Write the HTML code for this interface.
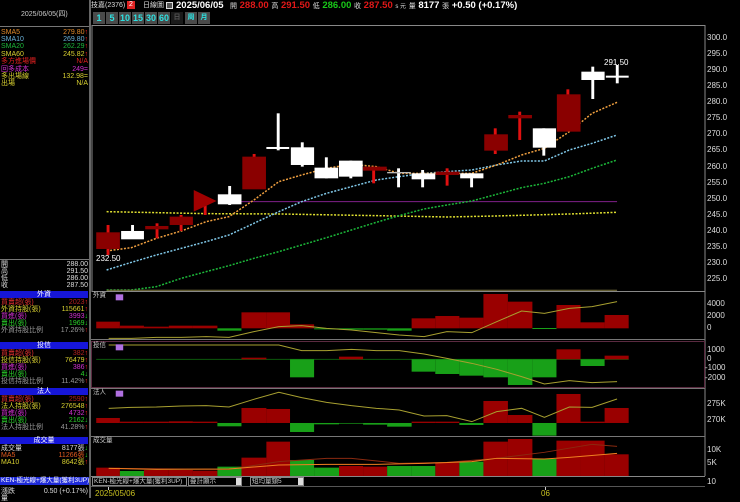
<!DOCTYPE html>
<html><head><meta charset="utf-8"><style>
*{margin:0;padding:0;box-sizing:border-box}
body{width:740px;height:498px;background:#000;overflow:hidden;position:relative;font-family:"Liberation Sans","Noto Sans CJK TC",sans-serif;color:#ddd}
.a{position:absolute;white-space:nowrap;line-height:1}
.s{font-size:7px}
.r{text-align:right}
.hd{position:absolute;left:0;width:88px;height:7px;background:#1616d8;color:#fff;font-size:7px;text-align:center;line-height:7px}
.btn{position:absolute;top:12px;height:12px;background:#4a4a4a;color:#2ee0e0;font-size:9px;text-align:center;line-height:12px;font-weight:bold}
.ax{position:absolute;left:707px;font-size:8px;color:#ddd;line-height:1}
</style></head><body>

<!-- left panel -->
<div class="a s" style="left:21px;top:11px;color:#ccc">2025/06/05(四)</div>
<div style="position:absolute;left:0;top:26px;width:89px;height:1px;background:#777"></div>
<div style="position:absolute;left:89px;top:0;width:2px;height:498px;background:#666"></div>

<div class="a s" style="left:1px;top:29px;color:#e08a2a">SMA5</div><div class="a s r" style="left:40px;width:48px;top:29px;color:#e08a2a">279.80<span style="color:#f22">↑</span></div>
<div class="a s" style="left:1px;top:36px;color:#6ab0d8">SMA10</div><div class="a s r" style="left:40px;width:48px;top:36px;color:#6ab0d8">269.80<span style="color:#f22">↑</span></div>
<div class="a s" style="left:1px;top:43px;color:#1cb83a">SMA20</div><div class="a s r" style="left:40px;width:48px;top:43px;color:#1cb83a">262.29<span style="color:#f22">↑</span></div>
<div class="a s" style="left:1px;top:51px;color:#d8d030">SMA60</div><div class="a s r" style="left:40px;width:48px;top:51px;color:#d8d030">245.82<span style="color:#f22">↑</span></div>
<div class="a s" style="left:1px;top:58px;color:#e02020">多方進場價</div><div class="a s r" style="left:40px;width:48px;top:58px;color:#e02020">N/A</div>
<div class="a s" style="left:1px;top:66px;color:#d030d0">回多成本</div><div class="a s r" style="left:40px;width:48px;top:66px;color:#d030d0">249=</div>
<div class="a s" style="left:1px;top:73px;color:#d8d030">多出場線</div><div class="a s r" style="left:40px;width:48px;top:73px;color:#d8d030">132.98=</div>
<div class="a s" style="left:1px;top:80px;color:#d8d030">出場</div><div class="a s r" style="left:40px;width:48px;top:80px;color:#d8d030">N/A</div>

<div style="position:absolute;left:0;top:259px;width:89px;height:1px;background:#777"></div>
<div class="a s" style="left:1px;top:261px">開</div><div class="a s r" style="left:40px;width:48px;top:261px">288.00</div>
<div class="a s" style="left:1px;top:268px">高</div><div class="a s r" style="left:40px;width:48px;top:268px">291.50</div>
<div class="a s" style="left:1px;top:275px">低</div><div class="a s r" style="left:40px;width:48px;top:275px">286.00</div>
<div class="a s" style="left:1px;top:282px">收</div><div class="a s r" style="left:40px;width:48px;top:282px">287.50</div>

<div class="hd" style="top:291px">外資</div>
<div class="a s" style="left:1px;top:299px;color:#e03030">買賣超(張)</div><div class="a s r" style="left:40px;width:48px;top:299px;color:#b02020">2023<span style="color:#f22">↑</span></div>
<div class="a s" style="left:1px;top:306px;color:#d8d030">外資持股(張)</div><div class="a s r" style="left:40px;width:48px;top:306px;color:#d8d030">115661<span style="color:#f22">↑</span></div>
<div class="a s" style="left:1px;top:313px;color:#d030d0">買進(張)</div><div class="a s r" style="left:40px;width:48px;top:313px;color:#d030d0">3993<span style="color:#2d2">↓</span></div>
<div class="a s" style="left:1px;top:320px;color:#2ad02a">賣出(張)</div><div class="a s r" style="left:40px;width:48px;top:320px;color:#2ad02a">1969<span style="color:#2d2">↓</span></div>
<div class="a s" style="left:1px;top:327px;color:#999">外資持股比例</div><div class="a s r" style="left:40px;width:48px;top:327px;color:#999">17.26%<span style="color:#f22">↑</span></div>

<div class="hd" style="top:342px">投信</div>
<div class="a s" style="left:1px;top:350px;color:#e03030">買賣超(張)</div><div class="a s r" style="left:40px;width:48px;top:350px;color:#b02020">382<span style="color:#f22">↑</span></div>
<div class="a s" style="left:1px;top:357px;color:#d8d030">投信持股(張)</div><div class="a s r" style="left:40px;width:48px;top:357px;color:#d8d030">76479<span style="color:#f22">↑</span></div>
<div class="a s" style="left:1px;top:364px;color:#d030d0">買進(張)</div><div class="a s r" style="left:40px;width:48px;top:364px;color:#d030d0">386<span style="color:#f22">↑</span></div>
<div class="a s" style="left:1px;top:371px;color:#2ad02a">賣出(張)</div><div class="a s r" style="left:40px;width:48px;top:371px;color:#2ad02a">4<span style="color:#2d2">↓</span></div>
<div class="a s" style="left:1px;top:378px;color:#999">投信持股比例</div><div class="a s r" style="left:40px;width:48px;top:378px;color:#999">11.42%<span style="color:#f22">↑</span></div>

<div class="hd" style="top:388px">法人</div>
<div class="a s" style="left:1px;top:396px;color:#e03030">買賣超(張)</div><div class="a s r" style="left:40px;width:48px;top:396px;color:#b02020">2590<span style="color:#f22">↑</span></div>
<div class="a s" style="left:1px;top:403px;color:#d8d030">法人持股(張)</div><div class="a s r" style="left:40px;width:48px;top:403px;color:#d8d030">276548<span style="color:#f22">↑</span></div>
<div class="a s" style="left:1px;top:410px;color:#d030d0">買進(張)</div><div class="a s r" style="left:40px;width:48px;top:410px;color:#d030d0">4732<span style="color:#f22">↑</span></div>
<div class="a s" style="left:1px;top:417px;color:#2ad02a">賣出(張)</div><div class="a s r" style="left:40px;width:48px;top:417px;color:#2ad02a">2162<span style="color:#2d2">↓</span></div>
<div class="a s" style="left:1px;top:424px;color:#999">法人持股比例</div><div class="a s r" style="left:40px;width:48px;top:424px;color:#999">41.28%<span style="color:#f22">↑</span></div>

<div class="hd" style="top:437px">成交量</div>
<div class="a s" style="left:1px;top:445px;color:#ddd">成交量</div><div class="a s r" style="left:40px;width:48px;top:445px;color:#ddd">8177張<span style="color:#2d2">↓</span></div>
<div class="a s" style="left:1px;top:452px;color:#e05a20">MA5</div><div class="a s r" style="left:40px;width:48px;top:452px;color:#e05a20">11266張<span style="color:#2d2">↓</span></div>
<div class="a s" style="left:1px;top:459px;color:#d8d030">MA10</div><div class="a s r" style="left:40px;width:48px;top:459px;color:#d8d030">8642張<span style="color:#f22">↑</span></div>

<div class="a" style="left:0;top:477px;width:89px;height:8px;background:#1e2ad8;color:#fff;font-size:6.5px;line-height:8px;padding-left:1px">KEN-極光線+爆大量(獲利3UP)</div>
<div class="a s" style="left:1px;top:488px">漲跌</div><div class="a s r" style="left:30px;width:58px;top:488px">0.50 (+0.17%)</div>
<div class="a s" style="left:1px;top:495px">量</div>

<!-- header -->
<div class="a" style="left:91px;top:2px;font-size:7px;color:#ddd">技嘉(2376)</div>
<div class="a" style="left:127px;top:1px;width:8px;height:8px;background:#d22;color:#fff;font-size:7px;text-align:center;line-height:8px">2</div>
<div class="a" style="left:143px;top:2px;font-size:7px">日線圖</div>
<div class="a" style="left:166px;top:2px;width:7px;height:7px;border:1px solid #ddd;background:#555"></div>
<div class="a" style="left:176px;top:1px;font-size:9.5px;font-weight:bold;color:#fff">2025/06/05</div>
<div class="a" style="left:230px;top:1px;font-size:9.5px;font-weight:bold"><span style="font-size:7px;font-weight:normal">開</span> <span style="color:#e01818">288.00</span> <span style="font-size:7px;font-weight:normal">高</span> <span style="color:#e01818">291.50</span> <span style="font-size:7px;font-weight:normal">低</span> <span style="color:#18c818">286.00</span> <span style="font-size:7px;font-weight:normal">收</span> <span style="color:#e01818">287.50</span> <span style="font-size:6px;font-weight:normal">s 元</span> <span style="font-size:7px;font-weight:normal">量</span> <span style="color:#fff">8177</span> <span style="font-size:7px;font-weight:normal">張</span> <span style="color:#fff">+0.50 (+0.17%)</span></div>

<div class="btn" style="left:93px;width:12px">1</div>
<div class="btn" style="left:106px;width:12px">5</div>
<div class="btn" style="left:119px;width:12px">10</div>
<div class="btn" style="left:132px;width:12px">15</div>
<div class="btn" style="left:145px;width:12px">30</div>
<div class="btn" style="left:158px;width:12px">60</div>
<div class="btn" style="left:171px;width:12px;background:#1a1a1a;color:#555;font-size:7px">日</div>
<div class="btn" style="left:185px;width:12px;font-size:7px">周</div>
<div class="btn" style="left:198px;width:12px;font-size:7px">月</div>

<svg width="740" height="498" style="position:absolute;left:0;top:0">
<rect x="92" y="25.5" width="613" height="266" fill="none" stroke="#888" stroke-width="1"/>
<line x1="705" y1="25" x2="705" y2="476" stroke="#888"/>
<line x1="91" y1="339.5" x2="705" y2="339.5" stroke="#777"/>
<rect x="91.5" y="341.5" width="613" height="46" fill="none" stroke="#5a2a40"/>
<line x1="91" y1="388.5" x2="705" y2="388.5" stroke="#777"/>
<line x1="91" y1="436.5" x2="705" y2="436.5" stroke="#777"/>
<line x1="91" y1="476.5" x2="705" y2="476.5" stroke="#888"/>
<line x1="91" y1="486.5" x2="705" y2="486.5" stroke="#555"/>

<g transform="translate(90,25) scale(0.415,0.3333)">
 <line x1="310" y1="530" x2="1270" y2="530" stroke="#80208a" stroke-width="1" vector-effect="non-scaling-stroke"/>
 <polyline fill="none" stroke="#e0e030" stroke-width="1.5" stroke-dasharray="2 1.5" vector-effect="non-scaling-stroke" points="40,560 160,563 280,566 455,567 690,572 860,576 980,573 1155,567 1270,562"/>
 <polyline fill="none" stroke="#1cb83a" stroke-width="1.5" stroke-dasharray="2 1.5" vector-effect="non-scaling-stroke" points="40,795 100,795 160,785 220,760 280,740 335,722 395,700 455,680 510,660 570,638 630,615 690,592 745,572 805,552 860,540 920,528 980,508 1040,488 1095,475 1155,455 1210,430 1270,405"/>
 <polyline fill="none" stroke="#80c8e8" stroke-width="1.5" stroke-dasharray="2 1.5" vector-effect="non-scaling-stroke" points="40,735 100,712 160,690 220,670 280,650 335,630 395,595 455,560 510,530 570,505 630,485 690,465 745,455 805,445 860,440 920,435 980,420 1040,408 1095,408 1155,375 1210,355 1270,330"/>
 <polyline fill="none" stroke="#f0a040" stroke-width="1.5" stroke-dasharray="2 1.5" vector-effect="non-scaling-stroke" points="40,678 100,668 160,640 220,618 280,590 335,575 395,525 455,470 510,450 570,430 630,418 690,425 745,445 805,445 860,445 920,445 980,420 1040,390 1095,370 1155,320 1210,265 1270,232"/>
 <line x1="40" y1="796" x2="1270" y2="796" stroke="#807840" stroke-width="1" vector-effect="non-scaling-stroke"/>
 <g fill="#e01010">
  <rect x="40" y="600" width="7" height="90"/>
  <rect x="158" y="595" width="7" height="45"/>
  <rect x="216" y="570" width="7" height="48"/>
  <rect x="274" y="540" width="7" height="30"/>
  <rect x="392" y="387" width="7" height="10"/>
  <rect x="680" y="425" width="7" height="50"/>
  <rect x="857" y="430" width="7" height="52"/>
  <rect x="973" y="310" width="7" height="77"/>
  <rect x="1032" y="260" width="7" height="85"/>
  <rect x="1148" y="193" width="7" height="20"/>
 </g>
 <g fill="#8a0000">
  <rect x="15" y="622" width="57" height="50"/>
  <rect x="133" y="603" width="56" height="10"/>
  <rect x="192" y="575" width="56" height="25"/>
  <polygon points="250,495 305,528 250,560" fill="#a00000"/>
  <rect x="367" y="395" width="57" height="98"/>
  <rect x="658" y="425" width="57" height="12"/>
  <rect x="833" y="440" width="57" height="10"/>
  <rect x="950" y="328" width="57" height="49"/>
  <rect x="1008" y="270" width="57" height="10"/>
  <rect x="1125" y="208" width="57" height="112"/>
 </g>
 <g fill="#fff">
  <rect x="99" y="600" width="7" height="20"/>
  <rect x="75" y="618" width="55" height="25"/>
  <rect x="333" y="483" width="7" height="57"/>
  <rect x="308" y="508" width="57" height="30"/>
  <rect x="450" y="265" width="7" height="111"/>
  <rect x="425" y="366" width="55" height="6"/>
  <rect x="508" y="352" width="7" height="73"/>
  <rect x="484" y="367" width="56" height="53"/>
  <rect x="566" y="397" width="7" height="63"/>
  <rect x="541" y="428" width="57" height="32"/>
  <rect x="625" y="407" width="7" height="53"/>
  <rect x="600" y="407" width="57" height="48"/>
  <rect x="740" y="430" width="7" height="57"/>
  <rect x="716" y="441" width="57" height="4" fill="#bbb"/>
  <rect x="798" y="435" width="7" height="52"/>
  <rect x="775" y="445" width="57" height="18"/>
  <rect x="916" y="445" width="7" height="42"/>
  <rect x="892" y="445" width="56" height="15"/>
  <rect x="1090" y="310" width="7" height="82"/>
  <rect x="1067" y="310" width="56" height="58"/>
  <rect x="1208" y="125" width="7" height="97"/>
  <rect x="1184" y="140" width="56" height="25"/>
  <rect x="1267" y="120" width="7" height="55"/>
  <rect x="1243" y="152" width="55" height="6"/>
 </g>
</g>
<text x="604" y="65" fill="#fff" font-size="8" font-family="Liberation Sans">291.50</text>
<text x="96" y="261" fill="#fff" font-size="8" font-family="Liberation Sans">232.50</text>

<g transform="translate(90,285) scale(0.415,0.3333)">
 <g fill="#9a0000">
  <rect x="15" y="110" width="57" height="20"/><rect x="72" y="122" width="58" height="8"/><rect x="130" y="125" width="60" height="5"/><rect x="190" y="122" width="58" height="8"/><rect x="248" y="122" width="59" height="8"/>
  <rect x="365" y="82" width="60" height="48"/><rect x="425" y="82" width="57" height="48"/><rect x="482" y="118" width="58" height="12"/>
  <rect x="775" y="100" width="57" height="30"/><rect x="832" y="93" width="58" height="37"/><rect x="890" y="98" width="58" height="32"/><rect x="948" y="27" width="59" height="103"/><rect x="1007" y="50" width="59" height="80"/>
  <rect x="1124" y="60" width="58" height="70"/><rect x="1182" y="112" width="58" height="18"/><rect x="1240" y="90" width="58" height="40"/>
 </g>
 <g fill="#18a018">
  <rect x="307" y="130" width="58" height="7"/><rect x="540" y="130" width="60" height="3"/><rect x="600" y="130" width="58" height="4"/><rect x="658" y="130" width="58" height="4"/><rect x="716" y="130" width="59" height="7"/><rect x="1066" y="129" width="58" height="3"/>
 </g>
 <polyline fill="none" stroke="#a8a030" stroke-width="1" vector-effect="non-scaling-stroke" points="45,160 100,160 160,157 220,157 280,155 335,157 395,140 455,125 510,122 570,130 630,135 690,143 745,150 805,155 860,140 920,143 980,110 1040,78 1095,85 1155,70 1210,65 1270,50"/>
 <rect x="62" y="28" width="18" height="18" fill="#b070e0"/>
 <line x1="15" y1="223" x2="1298" y2="223" stroke="#0c5a0c" stroke-width="1" vector-effect="non-scaling-stroke"/>
 <g fill="#9a0000"><rect x="365" y="218" width="60" height="5"/><rect x="600" y="215" width="58" height="8"/><rect x="1124" y="193" width="58" height="30"/><rect x="1240" y="212" width="58" height="11"/></g>
 <g fill="#18a018"><rect x="482" y="223" width="58" height="54"/><rect x="775" y="223" width="57" height="37"/><rect x="832" y="223" width="58" height="44"/><rect x="890" y="223" width="58" height="49"/><rect x="948" y="223" width="59" height="54"/><rect x="1007" y="223" width="59" height="77"/><rect x="1066" y="223" width="58" height="54"/><rect x="1182" y="223" width="58" height="20"/></g>
 <polyline fill="none" stroke="#a8a030" stroke-width="1" vector-effect="non-scaling-stroke" points="45,180 455,180 510,197 570,197 630,193 690,197 745,197 805,207 860,220 920,235 980,253 1040,275 1095,297 1155,287 1210,293 1270,290"/>
 <rect x="62" y="178" width="18" height="18" fill="#b070e0"/>
 <g fill="#9a0000">
  <rect x="15" y="399" width="57" height="15"/><rect x="72" y="410" width="58" height="4"/><rect x="130" y="410" width="60" height="4"/><rect x="190" y="409" width="58" height="5"/><rect x="248" y="410" width="59" height="4"/>
  <rect x="365" y="369" width="60" height="45"/><rect x="425" y="372" width="57" height="42"/><rect x="775" y="410" width="57" height="4"/><rect x="832" y="410" width="58" height="4"/>
  <rect x="948" y="348" width="59" height="66"/><rect x="1007" y="390" width="59" height="24"/><rect x="1124" y="327" width="58" height="87"/><rect x="1182" y="410" width="58" height="4"/><rect x="1240" y="369" width="58" height="45"/>
 </g>
 <g fill="#18a018"><rect x="307" y="414" width="58" height="10"/><rect x="482" y="414" width="58" height="27"/><rect x="540" y="414" width="60" height="4"/><rect x="600" y="414" width="58" height="2"/><rect x="658" y="414" width="58" height="5"/><rect x="716" y="414" width="59" height="11"/><rect x="890" y="414" width="58" height="6"/><rect x="1066" y="414" width="58" height="38"/></g>
 <polyline fill="none" stroke="#a8a030" stroke-width="1" vector-effect="non-scaling-stroke" points="45,370 100,367 160,366 220,363 280,362 335,366 395,343 455,322 510,338 570,352 630,362 690,370 745,375 805,393 860,392 920,410 980,380 1040,370 1095,397 1155,366 1210,367 1270,342"/>
 <rect x="62" y="317" width="18" height="18" fill="#b070e0"/>
 <g fill="#9a0000">
  <rect x="15" y="548" width="57" height="25"/><rect x="130" y="555" width="60" height="18"/><rect x="190" y="555" width="58" height="18"/><rect x="248" y="557" width="59" height="16"/>
  <rect x="365" y="518" width="60" height="55"/><rect x="425" y="470" width="57" height="103"/><rect x="600" y="543" width="58" height="30"/><rect x="658" y="545" width="58" height="28"/><rect x="832" y="533" width="58" height="40"/>
  <rect x="948" y="470" width="59" height="103"/><rect x="1007" y="462" width="59" height="111"/><rect x="1124" y="467" width="58" height="106"/><rect x="1182" y="467" width="58" height="106"/><rect x="1240" y="508" width="58" height="65"/>
 </g>
 <g fill="#18a018"><rect x="72" y="558" width="58" height="15"/><rect x="307" y="545" width="58" height="28"/><rect x="482" y="525" width="58" height="48"/><rect x="540" y="548" width="60" height="25"/><rect x="716" y="543" width="59" height="30"/><rect x="775" y="543" width="57" height="30"/><rect x="890" y="530" width="58" height="43"/><rect x="1066" y="522" width="58" height="51"/></g>
 <polyline fill="none" stroke="#8a2a10" stroke-width="1" vector-effect="non-scaling-stroke" points="45,550 335,553 455,530 570,520 630,520 745,535 860,532 980,520 1095,502 1210,478 1270,484"/>
 <polyline fill="none" stroke="#f08020" stroke-width="1" vector-effect="non-scaling-stroke" points="45,550 160,553 335,552 455,540 570,538 690,538 805,535 920,530 980,520 1095,522 1155,517 1270,505"/>
</g>
</svg>

<div class="a" style="left:93px;top:293px;font-size:6.5px;color:#ccc">外資</div>
<div class="a" style="left:93px;top:343px;font-size:6.5px;color:#ccc">投信</div>
<div class="a" style="left:93px;top:390px;font-size:6.5px;color:#ccc">法人</div>
<div class="a" style="left:93px;top:438px;font-size:6.5px;color:#ccc">成交量</div>

<div class="ax" style="top:34px">300.0</div><div class="ax" style="top:50px">295.0</div><div class="ax" style="top:66px">290.0</div><div class="ax" style="top:82px">285.0</div><div class="ax" style="top:98px">280.0</div><div class="ax" style="top:114px">275.0</div><div class="ax" style="top:130px">270.0</div><div class="ax" style="top:146px">265.0</div><div class="ax" style="top:163px">260.0</div><div class="ax" style="top:179px">255.0</div><div class="ax" style="top:195px">250.0</div><div class="ax" style="top:211px">245.0</div><div class="ax" style="top:227px">240.0</div><div class="ax" style="top:243px">235.0</div><div class="ax" style="top:259px">230.0</div><div class="ax" style="top:275px">225.0</div>
<div class="ax" style="top:300px">4000</div><div class="ax" style="top:312px">2000</div><div class="ax" style="top:324px">0</div>
<div class="ax" style="top:346px">1000</div><div class="ax" style="top:355px">0</div><div class="ax" style="top:364px;left:705px">-1000</div><div class="ax" style="top:374px;left:705px">-2000</div>
<div class="ax" style="top:400px">275K</div><div class="ax" style="top:416px">270K</div>
<div class="ax" style="top:446px">10K</div><div class="ax" style="top:459px">5K</div><div class="ax" style="top:478px">10</div>

<div class="a" style="left:92px;top:477px;width:95px;height:9px;border:1px solid #888;font-size:6.5px;line-height:7px;padding-left:1px;color:#ccc">KEN-極光線+爆大量(獲利3UP)</div>
<div class="a" style="left:188px;top:477px;width:54px;height:9px;border:1px solid #888;font-size:6.5px;line-height:7px;padding-left:1px;color:#ccc">疊計顯示</div>
<div class="a" style="left:236px;top:478px;width:5px;height:7px;background:#ddd"></div>
<div class="a" style="left:250px;top:477px;width:54px;height:9px;border:1px solid #888;font-size:6.5px;line-height:7px;padding-left:1px;color:#ccc">短均量頸5</div>
<div class="a" style="left:298px;top:478px;width:5px;height:7px;background:#ddd"></div>
<div style="position:absolute;left:108px;top:487px;width:1px;height:3px;background:#ccc"></div>
<div style="position:absolute;left:545px;top:487px;width:1px;height:3px;background:#ccc"></div>
<div class="a" style="left:95px;top:490px;font-size:8px;color:#c8c020">2025/05/06</div>
<div class="a" style="left:541px;top:490px;font-size:8px;color:#c8c020">06</div>
</body></html>
